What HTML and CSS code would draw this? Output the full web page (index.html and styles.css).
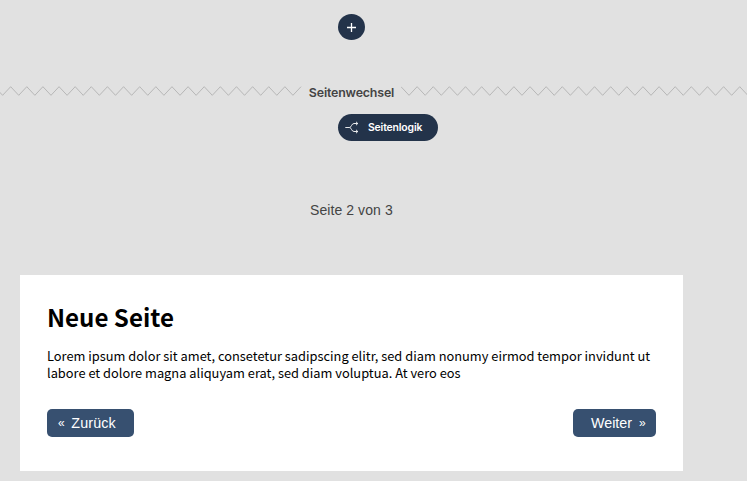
FILE: index.html
```html
<!DOCTYPE html>
<html lang="de">
<head>
<meta charset="utf-8">
<title>Neue Seite</title>
<link rel="stylesheet" href="styles.css">
</head>
<body>
<main class="editor">
  <button class="add" aria-label="Element"><svg width="27" height="26" viewBox="0 0 27 26"><path d="M13.5 9v9M9 13.5h9"/></svg></button>
  <div class="break">
    <svg class="zigzag" width="302" height="10"><path id="zig" d="M301 .7l-8.065 8.6-8.065-8.6-8.065 8.6-8.065-8.6-8.065 8.6-8.065-8.6-8.065 8.6-8.065-8.6-8.065 8.6-8.065-8.6-8.065 8.6-8.065-8.6-8.065 8.6-8.065-8.6-8.065 8.6-8.065-8.6-8.065 8.6-8.065-8.6-8.065 8.6-8.065-8.6-8.065 8.6-8.065-8.6-8.065 8.6-8.065-8.6-8.065 8.6-8.065-8.6-8.065 8.6-8.065-8.6-8.065 8.6-8.065-8.6-8.065 8.6-8.065-8.6-8.065 8.6-8.065-8.6-8.065 8.6-8.065-8.6-8.065 8.6-8.065-8.6-8.065 8.6-8.065-8.6-8.065 8.6-8.065-8.6-8.065 8.6-8.065-8.6"/></svg>
    <span class="break-label">Seitenwechsel</span>
    <svg class="zigzag" width="346" height="10"><use href="#zig" transform="translate(301) scale(-1 1)"/></svg>
  </div>
  <button class="logic">
    <svg width="14" height="13" viewBox="0 0 14 13"><path d="M0.3 6.5h4.5C6.5 6.1 6.6 2.5 9 2.5h3.6M4.8 6.5C6.5 6.9 6.6 10.5 9 10.5h3.6M11 .8l1.8 1.7L11 4.2M11 8.8l1.8 1.7-1.8 1.7"/></svg>
    <span>Seitenlogik</span>
  </button>
  <p class="counter">Seite 2 von 3</p>
  <section class="page">
    <h1>Neue Seite</h1>
    <p class="copy">Lorem ipsum dolor sit amet, consetetur sadipscing elitr, sed diam nonumy eirmod tempor invidunt ut<br>labore et dolore magna aliquyam erat, sed diam voluptua. At vero eos</p>
    <nav class="nav">
      <button class="step back"><span class="chev">«</span><span>Zurück</span></button>
      <button class="step next"><span>Weiter</span><span class="chev">»</span></button>
    </nav>
  </section>
</main>
</body>
</html>
```

FILE: styles.css
```css
* { box-sizing: border-box; }
body { margin: 0; background: #e1e1e1; overflow: hidden; }
button { border: 0; padding: 0; display: flex; align-items: center; color: #fff; white-space: nowrap; }
p, h1 { margin: 0; }
.editor { width: 747px; height: 481px; padding-top: 14px; display: flex; flex-direction: column; align-items: flex-start; }
.add { width: 27px; height: 26px; margin-left: 338px; border-radius: 50%; background: #23334a; }
.add path { stroke: #fff; stroke-width: 1.3; fill: none; }
.break { display: flex; width: 747px; height: 20px; margin-top: 43px; align-items: center; }
.zigzag { flex: none; margin-bottom: 4px; fill: none; stroke: #a5a5a5; stroke-width: .7; }
.break-label { width: 99px; text-align: center; font: 600 12.4px/20px Inter, sans-serif; letter-spacing: -.17px; color: #444; }
.logic { width: 100px; height: 27px; margin: 11px 0 0 338px; padding-left: 7px; gap: 9px; border-radius: 14px; background: #23334a; font: 600 10.4px/27px Inter, sans-serif; letter-spacing: -.15px; }
.logic path { fill: none; stroke: #fff; stroke-width: .9; }
.counter { margin: 59px 0 0 310px; font: 14px/20px "Liberation Sans", sans-serif; letter-spacing: .08px; color: #444; }
.page { width: 663px; height: 196px; margin: 55px 0 0 20px; padding: 25px 27px 0; background: #fff; color: #000; font-family: "Noto Sans CJK SC", sans-serif; }
h1 { font-size: 24.1px; line-height: 34px; font-weight: 700; white-space: nowrap; }
.copy { margin-top: 13px; font-size: 12.83px; line-height: 17px; white-space: nowrap; }
.nav { display: flex; justify-content: space-between; margin-top: 28px; }
.step { height: 28px; border-radius: 5px; background: #375070; font: 14.3px/28px "Liberation Sans", sans-serif; }
.back { width: 87px; padding-left: 11px; gap: 6.5px; letter-spacing: .15px; }
.next { width: 83px; padding-left: 18px; gap: 7px; }
.chev { font-size: 12px; }
```
